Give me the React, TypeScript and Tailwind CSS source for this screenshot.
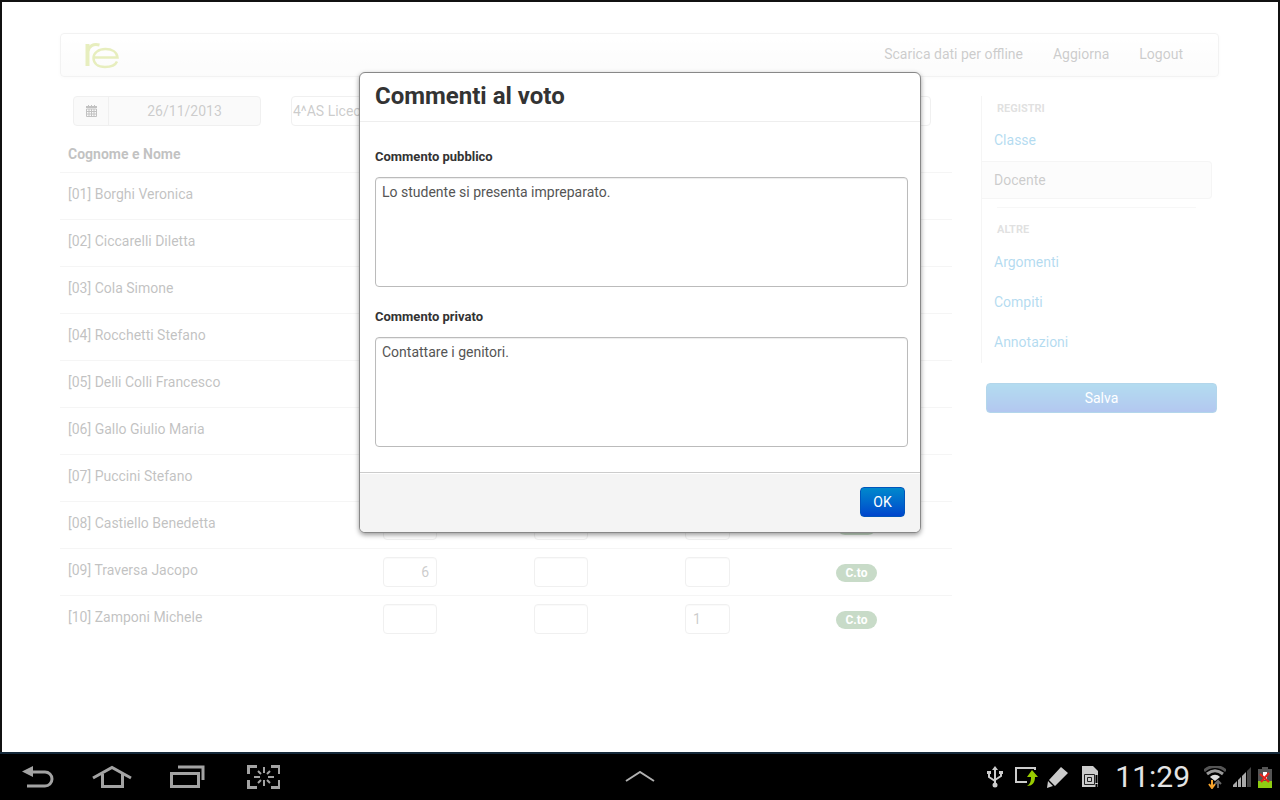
import React, { useState } from 'react';

type Student = {
  name: string;
  written?: string;
  practical?: string;
};

const students: Student[] = [
  { name: 'Borghi Veronica' },
  { name: 'Ciccarelli Diletta' },
  { name: 'Cola Simone' },
  { name: 'Rocchetti Stefano' },
  { name: 'Delli Colli Francesco' },
  { name: 'Gallo Giulio Maria' },
  { name: 'Puccini Stefano' },
  { name: 'Castiello Benedetta' },
  { name: 'Traversa Jacopo', written: '6' },
  { name: 'Zamponi Michele', practical: '1' },
];

const gradeInput =
  'block h-[30px] rounded border border-[#ccc] bg-white px-[7px] text-[#555] shadow-[inset_0_1px_1px_rgba(0,0,0,0.075)]';

const commentBox =
  'mt-[10px] block h-[110px] w-full resize-none rounded border border-[#bbb] px-1.5 py-1 text-[#555] shadow-[inset_0_1px_1px_rgba(0,0,0,0.075)]';

function Logo() {
  return (
    <svg width="35" height="30" viewBox="0 0 35 30" fill="none" stroke="#b0c626" role="img" aria-label="re">
      <path d="M2.500 4v22" strokeWidth="4" />
      <path d="M3 11C4 6 8 3.500 14.500 5" strokeWidth="3" />
      <path
        d="M8.500 17.500H32.500C32 12 27 9 20.500 9C13.500 9 8.500 13 8.500 18C8.500 23.500 13 27 20 27C26 27 30.500 25 32 21.500"
        strokeWidth="2.500"
      />
    </svg>
  );
}

function CalendarIcon() {
  return (
    <svg width="11" height="12" viewBox="0 0 11 12" aria-hidden="true">
      <path d="M0 1h2V0h1v1h2V0h1v1h2V0h1v1h2v2H0z" fill="#333" />
      <path d="M.5 4v7.500h10V4zM.5 6.500h10M.5 9h10M3 4v7M5.500 4v7M8 4v7" stroke="#333" fill="none" />
    </svg>
  );
}

function Navbar() {
  return (
    <header className="mr-px flex h-11 items-center justify-between rounded border border-[#d4d4d4] bg-linear-to-b from-white to-[#f2f2f2] pr-[35px] pl-6 shadow-[0_1px_4px_rgba(0,0,0,0.065)]">
      <Logo />
      <nav className="flex gap-[30px] pb-0.5 text-[#555]">
        <a href="#offline">Scarica dati per offline</a>
        <a href="#aggiorna">Aggiorna</a>
        <a href="#logout">Logout</a>
      </nav>
    </header>
  );
}

function GradesTable() {
  return (
    <table className="mt-[18px] w-full table-fixed border-collapse text-left">
      <colgroup>
        <col />
        <col className="w-[151px]" />
        <col className="w-[151px]" />
        <col className="w-[151px]" />
        <col className="w-[124px]" />
      </colgroup>
      <thead>
        <tr>
          <th className="h-7 px-2 pb-2 align-bottom font-bold">Cognome e Nome</th>
          <th />
          <th />
          <th />
          <th />
        </tr>
      </thead>
      <tbody>
        {students.map((student, i) => {
          const number = String(i + 1).padStart(2, '0');
          return (
            <tr key={student.name} className="h-[47px] border-t border-[#ddd] align-top">
              <td className="px-2 pt-[11px]">
                [{number}] {student.name}
              </td>
              <td className="px-2 pt-2">
                <input
                  className={`${gradeInput} w-[54px] text-right`}
                  aria-label={`Scritto ${student.name}`}
                  defaultValue={student.written}
                />
              </td>
              <td className="px-2 pt-2">
                <input
                  className={`${gradeInput} w-[54px] text-right`}
                  aria-label={`Orale ${student.name}`}
                />
              </td>
              <td className="px-2 pt-2">
                <input
                  className={`${gradeInput} w-[45px]`}
                  aria-label={`Pratico ${student.name}`}
                  defaultValue={student.practical}
                />
              </td>
              <td className="px-2 pt-[15px]">
                <button className="block h-[18px] w-[41px] rounded-full bg-[#468847] text-xs leading-[18px] font-bold text-white">
                  C.to
                </button>
              </td>
            </tr>
          );
        })}
      </tbody>
    </table>
  );
}

function Sidebar() {
  return (
    <aside className="w-[238px] shrink-0">
      <nav className="border-l border-[#ddd] pr-[7px] pb-px text-[#0088cc]">
        <h3 className="px-[15px] pt-[3px] pb-0.5 text-[11px] leading-5 font-bold text-[#999]">REGISTRI</h3>
        <a href="#classe" className="block px-3 py-[9px]">
          Classe
        </a>
        <a
          href="#docente"
          className="mt-0.5 block rounded-r border border-l-0 border-[#ddd] bg-[#f5f5f5] px-3 py-2 text-[#555]"
        >
          Docente
        </a>
        <hr className="mt-2 mr-4 mb-3 ml-[15px] border-[#e5e5e5]" />
        <h3 className="px-[15px] pb-0.5 text-[11px] leading-5 font-bold text-[#999]">ALTRE</h3>
        <a href="#argomenti" className="block px-3 py-[10px]">
          Argomenti
        </a>
        <a href="#compiti" className="block px-3 py-[10px]">
          Compiti
        </a>
        <a href="#annotazioni" className="block px-3 py-[10px]">
          Annotazioni
        </a>
      </nav>
      <button className="mt-5 mr-0.5 ml-[5px] block h-[30px] w-[231px] rounded border border-[#0077bb] bg-linear-to-b from-[#0088cc] to-[#0044cc] text-white">
        Salva
      </button>
    </aside>
  );
}

function CommentModal({ onClose }: { onClose: () => void }) {
  return (
    <div className="absolute inset-0 flex items-start justify-center bg-white/70 pt-[70px]">
      <div
        role="dialog"
        aria-labelledby="modal-title"
        className="w-[562px] overflow-hidden rounded-md border border-[#888] bg-white shadow-[0_2px_5px_rgba(0,0,0,0.4)]"
      >
        <div className="border-b border-[#eee] px-[15px] pt-2 pb-[10px]">
          <h2 id="modal-title" className="text-2xl leading-[30px] font-bold">
            Commenti al voto
          </h2>
        </div>
        <div className="flex flex-col gap-5 py-[25px] pr-3 pl-[15px]">
          <div>
            <label htmlFor="public-comment" className="block text-[13px] leading-5 font-bold">
              Commento pubblico
            </label>
            <textarea
              id="public-comment"
              className={commentBox}
              defaultValue="Lo studente si presenta impreparato."
            />
          </div>
          <div>
            <label htmlFor="private-comment" className="block text-[13px] leading-5 font-bold">
              Commento privato
            </label>
            <textarea
              id="private-comment"
              className={commentBox}
              defaultValue="Contattare i genitori."
            />
          </div>
        </div>
        <div className="flex justify-end border-t border-[#ccc] bg-[#f4f4f4] px-[15px] pt-[14px] pb-[15px] shadow-[inset_0_1px_0_#fff]">
          <button
            onClick={onClose}
            className="h-[30px] w-[45px] rounded border border-[#0055bb] bg-linear-to-b from-[#0088cc] to-[#0044cc] text-white"
          >
            OK
          </button>
        </div>
      </div>
    </div>
  );
}

function SystemBar() {
  return (
    <footer className="grid h-12 grid-cols-[1fr_auto_1fr] items-center border-t-2 border-[#15293a] bg-black">
      <div className="flex items-center gap-[37px] pl-[22px] text-[#a3a3a3]">
        <button aria-label="Indietro">
          <svg width="33" height="24" viewBox="0 0 33 24" fill="none" stroke="currentColor">
            <path d="M8 7h15a7 7 0 0 1 0 14H5" strokeWidth="3" />
            <path d="M0 6.500L11 1v11z" fill="currentColor" stroke="none" />
          </svg>
        </button>
        <button aria-label="Home">
          <svg width="40" height="24" viewBox="0 0 40 24" fill="none" stroke="currentColor" strokeWidth="3">
            <path d="M1 13L20 2.500L39 13" />
            <path d="M10.500 9v12.500h20V9" />
          </svg>
        </button>
        <button aria-label="Recenti">
          <svg width="36" height="24" viewBox="0 0 36 24" fill="none" stroke="currentColor" strokeWidth="3">
            <path d="M2.500 8.500h27v13h-27z" />
            <path d="M9 2h25v13" />
          </svg>
        </button>
        <button aria-label="Cattura schermo" className="ml-1">
          <svg width="34" height="24" viewBox="0 0 34 24" fill="none" stroke="currentColor">
            <path d="M2.500 9V1.500H11M25 1.500h8.500V9M33.500 15v7.500H25M11 22.500H2.500V15" strokeWidth="3" />
            <path d="M18 2v6M18 15v6M8 12h6M22 12h6M12 6l3 3M24 6l-3 3M12 18l3-3M24 18l-3-3" strokeWidth="2" />
          </svg>
        </button>
      </div>
      <button aria-label="Apri pannello" className="text-[#b0b0b0]">
        <svg width="30" height="12" viewBox="0 0 30 12" fill="none" stroke="currentColor" strokeWidth="2">
          <path d="M1 10L15 1l14 9" />
        </svg>
      </button>
      <div className="flex items-center justify-end pr-2 text-[#ccc]">
        <svg className="mr-3" width="16" height="22" viewBox="0 0 16 22" fill="none" stroke="currentColor" strokeWidth="2">
          <path d="M8 3v16M2 6v5l6 4M14 6v4l-6 4" />
          <path d="M8 0l3 4H5z" fill="currentColor" stroke="none" />
          <circle cx="8" cy="19" r="2.500" fill="currentColor" stroke="none" />
          <path d="M0 5h4v3H0zM12 5h4v3h-4z" fill="currentColor" stroke="none" />
        </svg>
        <svg className="mr-[9px]" width="23" height="22" viewBox="0 0 23 22" fill="none">
          <path d="M20 4V2H1v14h11" stroke="currentColor" strokeWidth="2" />
          <path d="M17 4l6 7h-3c0 6-3 9-8 9 3-2 4-4 4-9h-4z" fill="#9c0" />
        </svg>
        <svg className="mr-[14px]" width="21" height="21" viewBox="0 0 21 21" fill="currentColor">
          <path d="M14 0l7 6L8 19l-6-6zM1 14l5 5-6 2z" />
        </svg>
        <svg className="mr-4" width="17" height="22" viewBox="0 0 17 22" fill="none">
          <path d="M0 0h11l5 5v16H0z" fill="currentColor" />
          <path d="M2.500 8.500h10v10h-10zM5.500 11.500h4v4h-4z" stroke="#222" />
          <path d="M14.500 9v8M14.500 18v3" stroke="#000" strokeWidth="2" />
        </svg>
        <time className="mr-[14px] text-[30px] leading-8 text-[#e4e4e4]">11:29</time>
        <svg className="mr-[7px]" width="22" height="23" viewBox="0 0 22 23" fill="none">
          <path d="M0 5C6-1 16-1 22 5" stroke="#555" strokeWidth="3" />
          <path d="M3 8c5-4 11-4 16 0" stroke="#999" strokeWidth="3" />
          <path d="M6 11c3-3 7-3 10 0l-5 4z" fill="#ddd" />
          <path d="M8 14v8M5 18l3 4 3-4" stroke="#f5a32c" strokeWidth="2" />
          <path d="M14 22v-7M11 18l3-3 3 3" stroke="#666" strokeWidth="2" />
        </svg>
        <svg className="mr-1.5" width="19" height="20" viewBox="0 0 19 20">
          <path d="M0 20v-2l4-4v6zM5 20v-7l3-3v10zM9 20V9l4-4v15z" fill="#aaa" />
          <path d="M14 20V4l4-4v20z" fill="#444" />
        </svg>
        <svg width="14" height="21" viewBox="0 0 14 21" fill="none">
          <path d="M4 0h6v2h4v19H0V2h4z" fill="#555" />
          <path d="M0 14h14v7H0z" fill="#8ecb12" />
          <path d="M7 5v8" stroke="#fff" strokeWidth="4" />
          <path d="M2 7l9 8M11 6L3 15" stroke="#e3221b" strokeWidth="2" />
        </svg>
      </div>
    </footer>
  );
}

function App() {
  const [open, setOpen] = useState(true);

  return (
    <div className="flex min-h-screen flex-col bg-black font-[Roboto,sans-serif] text-sm leading-5 text-[#333]">
      <div className="relative flex-1 border-2 border-b-0 border-[#111] bg-white px-[58px] pt-[31px]">
        <Navbar />
        <div className="mt-[19px] flex gap-[29px] pr-px">
          <main className="min-w-0 flex-1">
            <div className="mr-[21px] ml-[13px] flex gap-[30px]">
              <div className="flex h-[30px] w-[188px] rounded border border-[#ccc] bg-[#eee]">
                <button aria-label="Calendario" className="flex w-[35px] items-center justify-center border-r border-[#ccc]">
                  <CalendarIcon />
                </button>
                <input
                  aria-label="Data"
                  className="min-w-0 flex-1 text-center text-[#555]"
                  defaultValue="26/11/2013"
                  readOnly
                />
              </div>
              <select
                aria-label="Classe"
                className="h-[30px] min-w-0 flex-1 appearance-none rounded border border-[#ccc] bg-white px-px text-[#555]"
              >
                <option>4^AS Liceo</option>
              </select>
            </div>
            <GradesTable />
          </main>
          <Sidebar />
        </div>
        {open && <CommentModal onClose={() => setOpen(false)} />}
      </div>
      <SystemBar />
    </div>
  );
}

export default App;
